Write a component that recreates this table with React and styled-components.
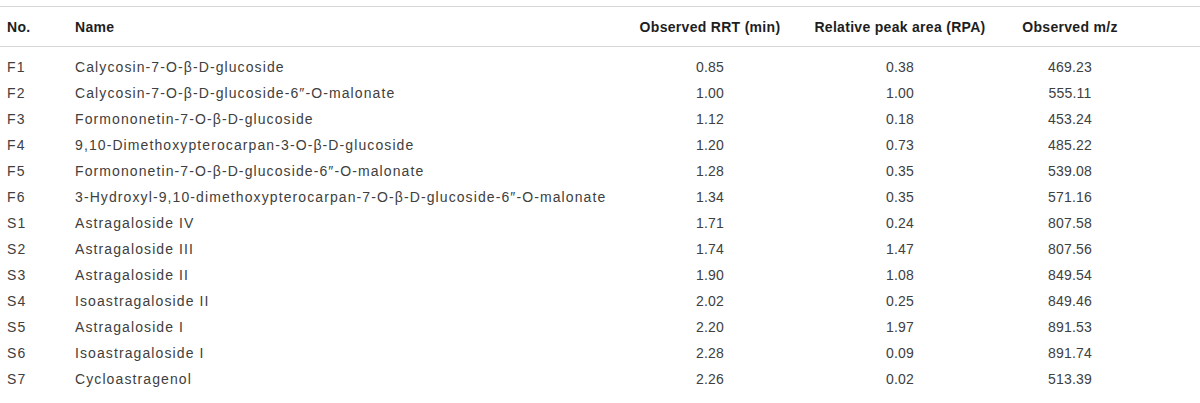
import React from 'react';
import styled, { createGlobalStyle } from 'styled-components';

const GlobalStyle = createGlobalStyle`
  html, body {
    margin: 0;
    padding: 0;
    background: #fff;
  }
  body {
    font-family: "Liberation Sans", Arial, Helvetica, sans-serif;
  }
`;

const Page = styled.div`
  width: 1200px;
  padding-top: 6px;
  background: #fff;
`;

const Table = styled.table`
  width: 1200px;
  border-collapse: collapse;
  table-layout: fixed;
  font-family: "Liberation Sans", Arial, Helvetica, sans-serif;
  font-size: 14px;
`;

const HeadRow = styled.tr`
  border-top: 1px solid #d6d6d6;
  border-bottom: 1px solid #d6d6d6;
`;

const Th = styled.th`
  height: 39px;
  padding: 0 0 0 ${(p) => (p.$align === 'center' ? 0 : 7)}px;
  padding-right: ${(p) => p.$padRight || 0}px;
  text-align: ${(p) => p.$align || 'left'};
  font-weight: bold;
  color: #1e1e1e;
  letter-spacing: 0.3px;
  vertical-align: middle;
`;

const Row = styled.tr`
  height: 26px;
  &:first-child {
    height: 33px;
  }
  &:first-child td {
    padding-top: 7px;
  }
`;

const Td = styled.td`
  padding: 0 0 0 ${(p) => (p.$align === 'center' ? 0 : 7)}px;
  padding-right: ${(p) => p.$padRight || 0}px;
  text-align: ${(p) => p.$align || 'left'};
  color: #404040;
  letter-spacing: ${(p) => (p.$align === 'center' ? 0.2 : 1.1)}px;
  white-space: nowrap;
  vertical-align: middle;
`;

const rows = [
  ['F1', 'Calycosin-7-O-β-D-glucoside', '0.85', '0.38', '469.23'],
  ['F2', 'Calycosin-7-O-β-D-glucoside-6″-O-malonate', '1.00', '1.00', '555.11'],
  ['F3', 'Formononetin-7-O-β-D-glucoside', '1.12', '0.18', '453.24'],
  ['F4', '9,10-Dimethoxypterocarpan-3-O-β-D-glucoside', '1.20', '0.73', '485.22'],
  ['F5', 'Formononetin-7-O-β-D-glucoside-6″-O-malonate', '1.28', '0.35', '539.08'],
  ['F6', '3-Hydroxyl-9,10-dimethoxypterocarpan-7-O-β-D-glucoside-6″-O-malonate', '1.34', '0.35', '571.16'],
  ['S1', 'Astragaloside IV', '1.71', '0.24', '807.58'],
  ['S2', 'Astragaloside III', '1.74', '1.47', '807.56'],
  ['S3', 'Astragaloside II', '1.90', '1.08', '849.54'],
  ['S4', 'Isoastragaloside II', '2.02', '0.25', '849.46'],
  ['S5', 'Astragaloside I', '2.20', '1.97', '891.53'],
  ['S6', 'Isoastragaloside I', '2.28', '0.09', '891.74'],
  ['S7', 'Cycloastragenol', '2.26', '0.02', '513.39'],
];

const App = () => (
  <Page>
    <GlobalStyle />
    <Table>
      <colgroup>
        <col style={{ width: 68 }} />
        <col style={{ width: 552 }} />
        <col style={{ width: 180 }} />
        <col style={{ width: 200 }} />
        <col style={{ width: 200 }} />
      </colgroup>
      <thead>
        <HeadRow>
          <Th>No.</Th>
          <Th>Name</Th>
          <Th $align="center">Observed RRT (min)</Th>
          <Th $align="center">Relative peak area (RPA)</Th>
          <Th $align="center" $padRight={60}>Observed m/z</Th>
        </HeadRow>
      </thead>
      <tbody>
        {rows.map(([no, name, rrt, rpa, mz]) => (
          <Row key={no}>
            <Td>{no}</Td>
            <Td>{name}</Td>
            <Td $align="center">{rrt}</Td>
            <Td $align="center">{rpa}</Td>
            <Td $align="center" $padRight={60}>{mz}</Td>
          </Row>
        ))}
      </tbody>
    </Table>
  </Page>
);

export default App;
